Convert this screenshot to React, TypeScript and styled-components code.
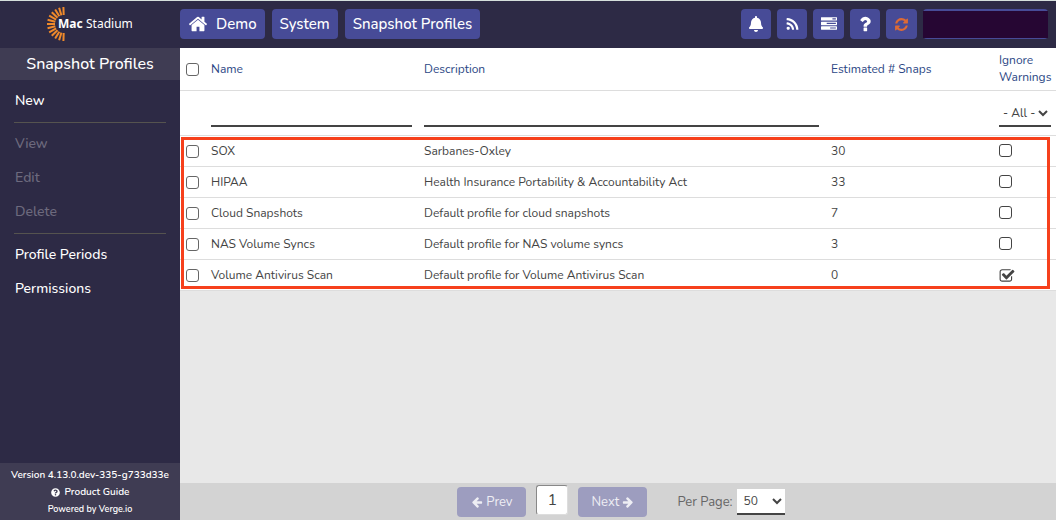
import React from 'react';
import styled, { createGlobalStyle } from 'styled-components';
import { FaBell, FaQuestionCircle } from 'react-icons/fa';

const GlobalStyle = createGlobalStyle`
  *, *::before, *::after { box-sizing: border-box; }
  body {
    margin: 0;
    background: #e8e8e8;
    color: #444;
    font-family: Nunito, Lato, sans-serif;
    font-size: 12px;
  }
  button, input, select { font: inherit; color: inherit; margin: 0; }
  a { color: inherit; text-decoration: none; }
`;

const Page = styled.div`
  display: flex;
  flex-direction: column;
  min-height: 100vh;
`;

const TopBar = styled.header`
  display: flex;
  align-items: center;
  height: 48px;
  padding: 0 8px 1px 0;
  border-top: 1px solid #d5dfdc;
  background: #2d2a45;
  color: #fff;
`;

const Brand = styled.a`
  flex: none;
  width: 180px;
  padding-left: 46px;
  svg { display: block; }
`;

const Crumbs = styled.nav`
  display: flex;
  flex: 1;
  gap: 7px;
`;

const Crumb = styled.a`
  display: flex;
  align-items: center;
  gap: 8px;
  height: 30px;
  padding: 0 8px;
  border-radius: 4px;
  background: #474b97;
  font-size: 15px;
  font-weight: 500;
`;

const Tools = styled.div`
  display: flex;
  gap: 6px;
`;

const ToolButton = styled.button<{ $accent?: boolean; $wide?: boolean }>`
  display: flex;
  align-items: center;
  justify-content: center;
  width: ${(p) => (p.$wide ? 31 : 30)}px;
  height: 30px;
  padding: 0;
  border: 0;
  border-radius: 4px;
  background: #474b97;
  color: ${(p) => (p.$accent ? '#dd6a35' : '#fff')};
`;

const UserButton = styled(ToolButton)`
  width: 125px;
  padding: 2px 0 1px;
  align-items: stretch;
`;

const UserMask = styled.span`
  flex: 1;
  background: #260633;
`;

const Body = styled.div`
  display: flex;
  flex: 1;
`;

const Sidebar = styled.aside`
  display: flex;
  flex: none;
  flex-direction: column;
  width: 180px;
  background: #2d2a45;
  color: #fff;
`;

const SideTitle = styled.h1`
  margin: 0;
  background: #3f3c53;
  font-size: 16px;
  font-weight: 500;
  line-height: 32px;
  text-align: center;
`;

const SideMenu = styled.nav`
  display: flex;
  flex: 1;
  flex-direction: column;
  padding: 4px 14px;
`;

const SideItem = styled.button`
  height: 34px;
  padding: 0 1px 2px;
  border: 0;
  background: none;
  font-size: 14px;
  font-weight: 500;
  text-align: left;
  &:disabled { color: #6d6a7e; }
`;

const Divider = styled.hr`
  width: 100%;
  height: 1px;
  margin: 4px 0;
  border: 0;
  background: #55534f;
`;

const SideFooter = styled.footer`
  display: flex;
  flex-direction: column;
  align-items: center;
  padding: 4px 0 3px;
  background: #3f3c53;
  font-size: 10px;
  line-height: 17px;
  font-weight: 600;
  white-space: nowrap;
  a { display: flex; align-items: center; gap: 5px; }
`;

const Powered = styled.span`
  font-size: 9px;
  line-height: 16px;
`;

const Main = styled.main`
  display: flex;
  flex: 1;
  flex-direction: column;
  justify-content: space-between;
  min-width: 0;
`;

const TableArea = styled.div`
  position: relative;
`;

const Highlight = styled.div`
  position: absolute;
  inset: 89px 6px 2px 1px;
  border: 3px solid #f6401c;
  pointer-events: none;
`;

const Table = styled.table`
  width: 100%;
  table-layout: fixed;
  border-collapse: separate;
  border-spacing: 0;
  background: #fff;
`;

const Col = styled.col<{ $w?: number }>`
  width: ${(p) => (p.$w ? `${p.$w}px` : 'auto')};
`;

const Head = styled.th`
  height: 43px;
  padding: 0 5px 0 0;
  border-bottom: 1px solid #ddd;
  color: #2c4785;
  font-weight: 400;
  line-height: 17px;
  text-align: left;
  &:first-child { padding-left: 6px; }
`;

const FilterCell = styled.td`
  height: 45px;
  padding: 0 12px 8px 0;
  border-bottom: 1px solid #ddd;
  vertical-align: bottom;
  &:last-child { padding-right: 5px; }
`;

const Cell = styled.td`
  height: 31px;
  padding: 0;
  border-bottom: 1px solid #ddd;
  &:first-child { padding-left: 6px; }
`;

const FilterInput = styled.input`
  display: block;
  width: 100%;
  height: 26px;
  border: 0;
  border-bottom: 2px solid #444;
  background: none;
  outline: 0;
`;

const SelectBox = styled.span<{ $large?: boolean }>`
  display: grid;
  align-items: center;
  width: ${(p) => (p.$large ? '48px' : '100%')};
  height: 26px;
  border-bottom: 2px solid #444;
  background: #fff;
  > * { grid-area: 1 / 1; }
  select {
    width: 100%;
    padding: 0 0 0 ${(p) => (p.$large ? 7 : 4)}px;
    border: 0;
    background: none;
    appearance: none;
    font-size: 12px;
  }
  svg { justify-self: end; margin-right: 3px; pointer-events: none; }
`;

const Check = styled.span`
  display: grid;
  width: 16px;
  height: 14px;
  > * { grid-area: 1 / 1; }
  svg { align-self: center; pointer-events: none; }
`;

const Tick = styled.input`
  display: block;
  appearance: none;
  width: 13px;
  height: 13px;
  border: 1px solid #666;
  border-radius: 3px;
  background: #fff;
`;

const FlagTick = styled(Tick)`
  border-color: #444;
  &:checked { border-color: transparent; }
`;

const Pager = styled.footer`
  display: flex;
  align-items: center;
  justify-content: center;
  height: 37px;
  padding-left: 6px;
  background: #d3d3d3;
`;

const PageButton = styled.button`
  display: flex;
  align-items: center;
  justify-content: center;
  gap: 3px;
  width: 69px;
  height: 30px;
  padding: 0;
  border: 0;
  border-radius: 4px;
  background: #9d9dbf;
  font-size: 13px;
  &:disabled { color: #eeeef4; }
`;

const PageInput = styled.input`
  width: 32px;
  height: 30px;
  margin: 0 10px 4px;
  padding: 0;
  border: 1px solid #888;
  border-right-color: #ddd;
  border-bottom-color: #ddd;
  border-radius: 3px;
  background: #fff;
  font-size: 16px;
  text-align: center;
`;

const PerPage = styled.label`
  display: flex;
  align-items: center;
  gap: 4px;
  margin-left: 30px;
  color: #666;
  font-size: 13px;
  select { color: #444; }
`;

const Glyph = ({ d, size, flip }: { d: string; size: number; flip?: boolean }) => (
  <svg width={size} height={size} viewBox="0 0 1792 1792" fill="currentColor" aria-hidden="true">
    <path d={d} transform={flip ? 'translate(1792 0) scale(-1 1)' : undefined} />
  </svg>
);

const HOME =
  'M1472 992v480q0 26-19 45t-45 19h-384v-384h-256v384h-384q-26 0-45-19t-19-45v-480q0-1 .5-3t.5-3l575-474 575 474q1 2 1 6zm223-69l-62 74q-8 9-21 11h-3q-13 0-21-7l-692-577-692 577q-12 8-24 7-13-2-21-11l-62-74q-8-10-7-23.5t11-21.5l719-599q32-26 76-26t76 26l244 204v-195q0-14 9-23t23-9h192q14 0 23 9t9 23v408l219 182q10 8 11 21.5t-7 23.5z';
const RSS =
  'M576 1344q0 80-56 136t-136 56-136-56-56-136 56-136 136-56 136 56 56 136zm512 123q2 28-17 48-18 21-47 21h-135q-25 0-43-16.500t-20-41.500q-22-229-184.500-391.500t-391.500-184.500q-25-2-41.500-20t-16.500-43v-135q0-29 21-47 17-17 43-17h5q160 13 306 80.500t259 181.500q114 113 181.500 259t80.500 306zm512 2q2 27-18 47-18 20-46 20h-143q-26 0-44.500-17.500t-19.500-42.500q-12-215-101-408.500t-231.500-336-336-231.500-408.500-102q-25-1-42.500-19.500t-17.500-43.500v-143q0-28 20-46 18-18 44-18h3q262 13 501.500 120t425.500 294q187 186 294 425.500t120 501.500z';
const TASKS =
  'M1024 1408h640v-128h-640v128zm-384-512h1024v-128h-1024v128zm640-512h384v-128h-384v128zm512 832v256q0 26-19 45t-45 19h-1664q-26 0-45-19t-19-45v-256q0-26 19-45t45-19h1664q26 0 45 19t19 45zm0-512v256q0 26-19 45t-45 19h-1664q-26 0-45-19t-19-45v-256q0-26 19-45t45-19h1664q26 0 45 19t19 45zm0-512v256q0 26-19 45t-45 19h-1664q-26 0-45-19t-19-45v-256q0-26 19-45t45-19h1664q26 0 45 19t19 45z';
const QUESTION =
  'M1088 1256v240q0 16-12 28t-28 12h-240q-16 0-28-12t-12-28v-240q0-16 12-28t28-12h240q16 0 28 12t12 28zm316-600q0 54-15.500 101t-35 76.500-55 59.500-57.500 43.500-61 35.500q-41 23-68.500 65t-27.500 67q0 17-12 32.500t-28 15.500h-240q-15 0-25.500-18.500t-10.500-37.500v-45q0-83 65-156.500t143-108.500q59-27 84-56t25-76q0-42-46.500-74t-107.500-32q-65 0-108 29-35 25-107 115-13 16-31 16-12 0-25-8l-164-125q-13-10-15.500-25t5.500-28q160-266 464-266 80 0 161 31t146 83 106 127.500 41 158.500z';
const REFRESH =
  'M1639 1056q0 5-1 7-64 268-268 434.500t-478 166.500q-146 0-282.500-55t-243.500-157l-129 129q-19 19-45 19t-45-19-19-45v-448q0-26 19-45t45-19h448q26 0 45 19t19 45-19 45l-137 137q71 66 161 102t187 36q134 0 250-65t186-179q11-17 53-117 8-23 30-23h192q13 0 22.500 9.500t9.500 22.500zm25-800v448q0 26-19 45t-45 19h-448q-26 0-45-19t-19-45 19-45l138-138q-148-137-349-137-134 0-250 65t-186 179q-11 17-53 117-8 23-30 23h-199q-13 0-22.500-9.500t-9.500-22.500v-7q65-268 270-434.500t480-166.500q146 0 284 55.500t245 156.500l130-129q19-19 45-19t45 19 19 45z';
const CHECKED =
  'M1472 930v318q0 119-84.500 203.500t-203.500 84.500h-832q-119 0-203.500-84.500t-84.500-203.500v-832q0-119 84.500-203.500t203.500-84.500h832q63 0 117 25 15 7 18 23 3 17-9 29l-49 49q-10 10-23 10-3 0-9-2-23-6-45-6h-832q-66 0-113 47t-47 113v832q0 66 47 113t113 47h832q66 0 113-47t47-113v-254q0-13 9-22l64-64q10-10 23-10 6 0 12 3 20 8 20 29zm231-489l-814 814q-24 24-57 24t-57-24l-430-430q-24-24-24-57t24-57l110-110q24-24 57-24t57 24l263 263 647-647q24-24 57-24t57 24l110 110q24 24 24 57t-24 57z';
const ARROW =
  'M1664 896v128q0 53-32.500 90.500t-84.500 37.500h-704l293 294q38 36 38 90t-38 90l-75 76q-37 37-90 37-52 0-91-37l-651-652q-37-37-37-90 0-52 37-91l651-650q38-38 91-38 52 0 90 38l75 74q38 38 38 91t-38 91l-293 293h704q52 0 84.500 37.500t32.500 90.500z';

const Chevron = () => (
  <svg width="10" height="8" viewBox="0 0 10 8" fill="none" stroke="#444" strokeWidth="2" aria-hidden="true">
    <path d="M1 2l4 4 4-4" />
  </svg>
);

const RAYS = Array.from({ length: 13 }, (_, i) => 92 + (i * 176) / 12);

const Logo = () => (
  <svg width="90" height="36" viewBox="0 0 90 36" aria-hidden="true">
    <g stroke="#ef8a2b" strokeWidth="2">
      {RAYS.map((deg) => {
        const a = (deg * Math.PI) / 180;
        const c = Math.cos(a);
        const s = Math.sin(a);
        return <line key={deg} x1={18 + c * 9} y1={18 + s * 9} x2={18 + c * 17} y2={18 + s * 17} />;
      })}
    </g>
    <g fill="#fff" fontFamily="Noto Sans, sans-serif" fontSize="12">
      <text x="12" y="22" fontWeight="700">Mac</text>
      <text x="40" y="22">Stadium</text>
    </g>
  </svg>
);

const profiles = [
  { name: 'SOX', description: 'Sarbanes-Oxley', snaps: 30, ignore: false },
  { name: 'HIPAA', description: 'Health Insurance Portability & Accountability Act', snaps: 33, ignore: false },
  { name: 'Cloud Snapshots', description: 'Default profile for cloud snapshots', snaps: 7, ignore: false },
  { name: 'NAS Volume Syncs', description: 'Default profile for NAS volume syncs', snaps: 3, ignore: false },
  { name: 'Volume Antivirus Scan', description: 'Default profile for Volume Antivirus Scan', snaps: 0, ignore: true },
];

export default function App() {
  return (
    <Page>
      <GlobalStyle />
      <TopBar>
        <Brand href="#" aria-label="MacStadium"><Logo /></Brand>
        <Crumbs aria-label="Breadcrumb">
          <Crumb href="#"><Glyph d={HOME} size={20} />Demo</Crumb>
          <Crumb href="#">System</Crumb>
          <Crumb href="#">Snapshot Profiles</Crumb>
        </Crumbs>
        <Tools>
          <ToolButton aria-label="Alerts"><FaBell size={16} /></ToolButton>
          <ToolButton aria-label="Feed"><Glyph d={RSS} size={15} /></ToolButton>
          <ToolButton aria-label="Tasks" $wide><Glyph d={TASKS} size={16} /></ToolButton>
          <ToolButton aria-label="Help"><Glyph d={QUESTION} size={20} /></ToolButton>
          <ToolButton aria-label="Refresh" $accent $wide><Glyph d={REFRESH} size={15} /></ToolButton>
          <UserButton aria-label="Account"><UserMask /></UserButton>
        </Tools>
      </TopBar>
      <Body>
        <Sidebar>
          <SideTitle>Snapshot Profiles</SideTitle>
          <SideMenu>
            <SideItem>New</SideItem>
            <Divider />
            <SideItem disabled>View</SideItem>
            <SideItem disabled>Edit</SideItem>
            <SideItem disabled>Delete</SideItem>
            <Divider />
            <SideItem>Profile Periods</SideItem>
            <SideItem>Permissions</SideItem>
          </SideMenu>
          <SideFooter>
            <span>Version 4.13.0.dev-335-g733d33e</span>
            <a href="#"><FaQuestionCircle size={9} />Product Guide</a>
            <Powered>Powered by Verge.io</Powered>
          </SideFooter>
        </Sidebar>
        <Main>
          <TableArea>
            <Table>
              <colgroup>
                <Col $w={31} />
                <Col $w={213} />
                <Col />
                <Col $w={168} />
                <Col $w={57} />
              </colgroup>
              <thead>
                <tr>
                  <Head><Tick type="checkbox" aria-label="Select all" /></Head>
                  <Head>Name</Head>
                  <Head>Description</Head>
                  <Head>Estimated # Snaps</Head>
                  <Head>Ignore Warnings</Head>
                </tr>
                <tr>
                  <FilterCell />
                  <FilterCell><FilterInput aria-label="Filter by name" /></FilterCell>
                  <FilterCell><FilterInput aria-label="Filter by description" /></FilterCell>
                  <FilterCell />
                  <FilterCell>
                    <SelectBox>
                      <select aria-label="Filter by ignore warnings"><option>- All -</option></select>
                      <Chevron />
                    </SelectBox>
                  </FilterCell>
                </tr>
              </thead>
              <tbody>
                {profiles.map((p) => (
                  <tr key={p.name}>
                    <Cell><Tick type="checkbox" aria-label={`Select ${p.name}`} /></Cell>
                    <Cell>{p.name}</Cell>
                    <Cell>{p.description}</Cell>
                    <Cell>{p.snaps}</Cell>
                    <Cell>
                      <Check>
                        <FlagTick type="checkbox" aria-label={`Ignore warnings for ${p.name}`} defaultChecked={p.ignore} />
                        {p.ignore && <Glyph d={CHECKED} size={16} />}
                      </Check>
                    </Cell>
                  </tr>
                ))}
              </tbody>
            </Table>
            <Highlight />
          </TableArea>
          <Pager>
            <PageButton disabled><Glyph d={ARROW} size={12} />Prev</PageButton>
            <PageInput aria-label="Page" defaultValue="1" />
            <PageButton disabled>Next<Glyph d={ARROW} size={12} flip /></PageButton>
            <PerPage>
              Per Page:
              <SelectBox $large>
                <select><option>50</option></select>
                <Chevron />
              </SelectBox>
            </PerPage>
          </Pager>
        </Main>
      </Body>
    </Page>
  );
}
